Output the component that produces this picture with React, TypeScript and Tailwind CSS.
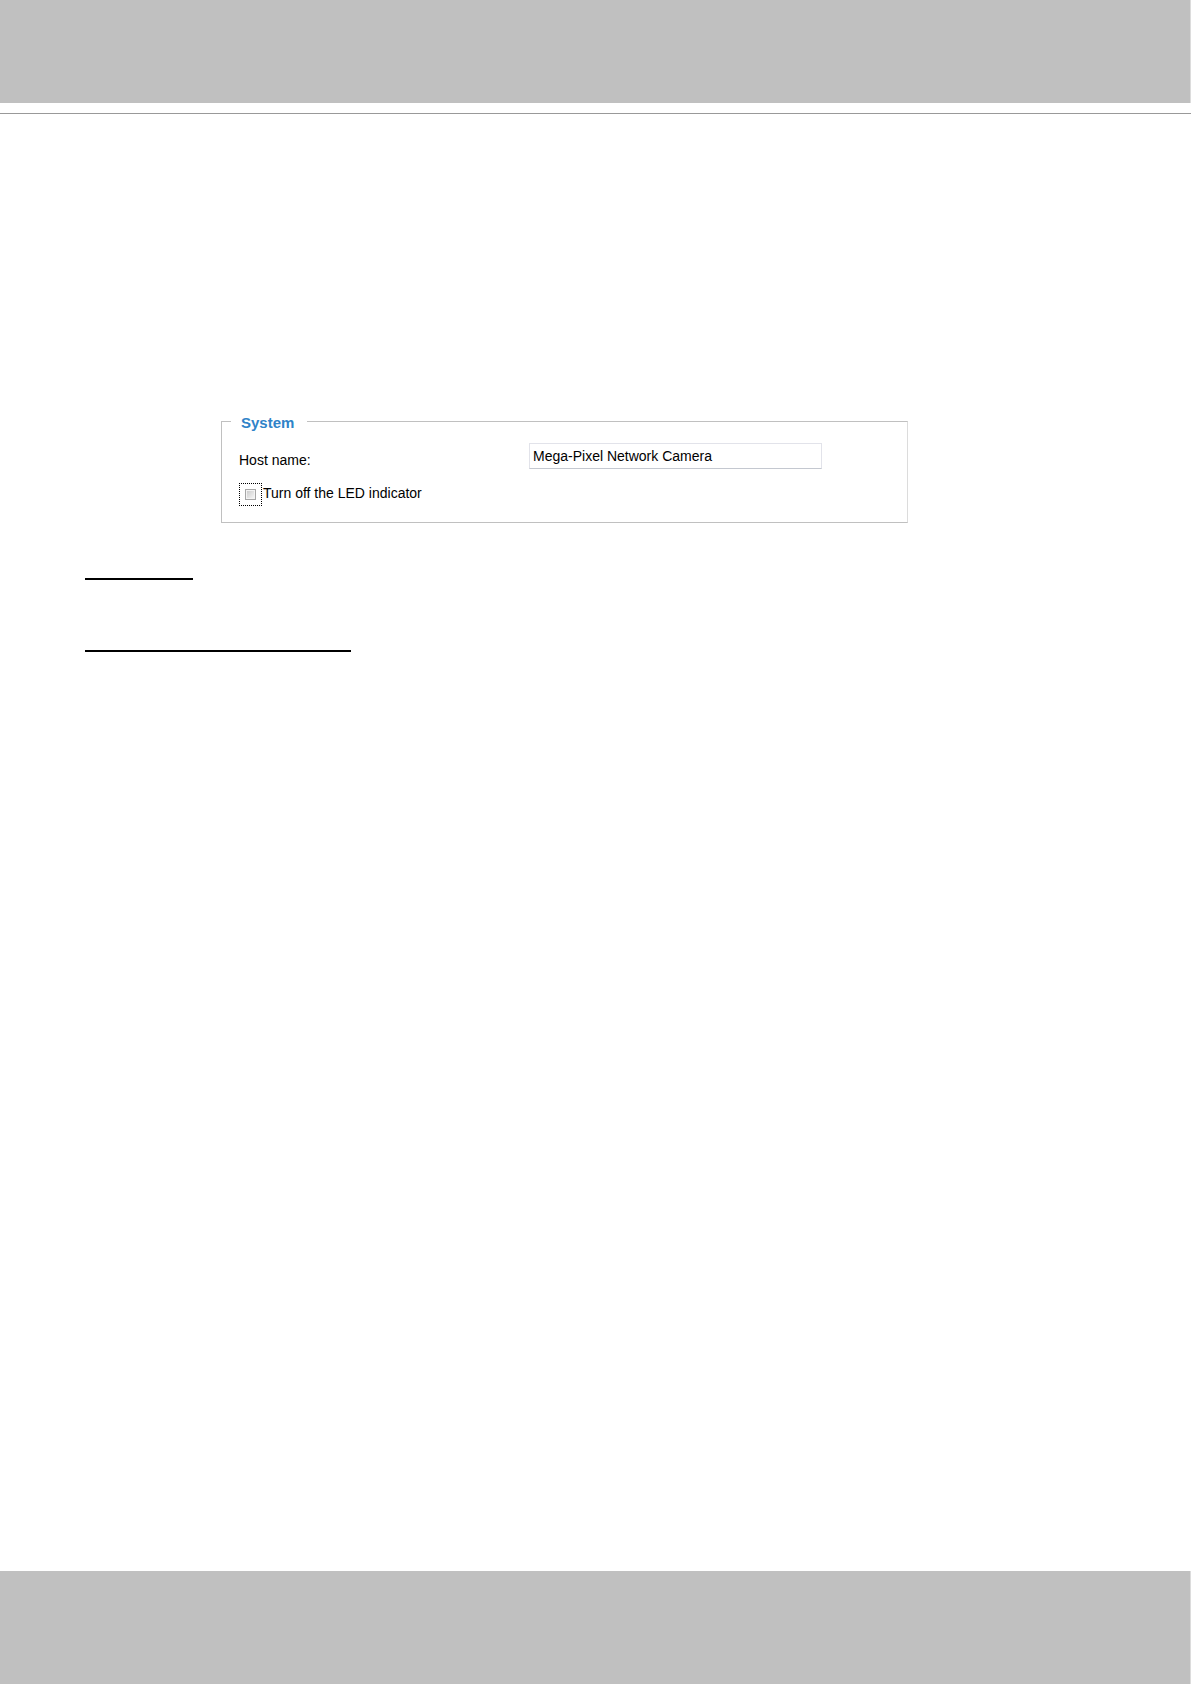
import { useState } from "react";

export default function App() {
  const [hostName, setHostName] = useState("Mega-Pixel Network Camera");
  const [ledOff, setLedOff] = useState(false);

  return (
    <div className="flex min-h-screen flex-col bg-white font-['Liberation_Sans',Arial,sans-serif] text-sm text-black">
      <header className="border-b border-[#999999] pb-[10px]">
        <div className="h-[103px] border-r border-[#dcdcdc] bg-[#c0c0c0]" />
      </header>

      <main className="flex-1 px-[85px] pt-[297px]">
        <form className="mr-[198px] ml-[136px]">
          <fieldset className="border border-t-[#c0c0c0] border-r-[#dcdcdc] border-b-[#c0c0c0] border-l-[#c0c0c0] px-[9px] pb-4">
            <legend className="w-[76px] pt-1 pl-[10px] text-[15px] leading-4 font-bold text-[#2f83c8]">
              System
            </legend>

            {/* Host name row */}
            <div className="flex items-end pt-3 pl-2">
              <label htmlFor="host-name" className="w-[290px] pb-px leading-4">
                Host name:
              </label>
              <input
                id="host-name"
                type="text"
                value={hostName}
                onChange={(e) => setHostName(e.target.value)}
                className="h-[26px] w-[293px] border border-[#e2e3ea] border-b-[#c4c8d0] bg-white px-[3px] outline-none"
              />
            </div>

            {/* LED row */}
            <div className="flex items-center pt-[14px] pl-2">
              <span className="flex size-[23px] items-center justify-center border border-dotted border-black">
                <input
                  id="led-off"
                  type="checkbox"
                  checked={ledOff}
                  onChange={(e) => setLedOff(e.target.checked)}
                  className="size-[11px] appearance-none border border-[#a6a6a6] bg-linear-to-br from-[#c8c8c8] to-[#fafafa] shadow-[inset_0_0_0_1px_#f4f4f4] checked:bg-gray-500"
                />
              </span>
              <label htmlFor="led-off" className="pb-1 pl-px leading-4">
                Turn off the LED indicator
              </label>
            </div>
          </fieldset>
        </form>

        <hr className="mt-[55px] h-[2px] w-[108px] border-0 bg-black" />
        <hr className="mt-[70px] h-[2px] w-[266px] border-0 bg-black" />
      </main>

      <footer className="h-[113px] border-r border-[#dcdcdc] bg-[#c0c0c0]" />
    </div>
  );
}
